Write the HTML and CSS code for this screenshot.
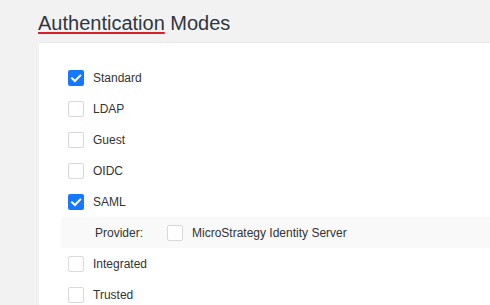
FILE: index.html
```html
<!DOCTYPE html>
<html>
<head>
<meta charset="utf-8">
<link rel="stylesheet" href="styles.css">
</head>
<body>
<div class="page">
  <h1 class="title"><span class="title-key">Authentication</span> Modes</h1>
  <div class="panel">
    <div class="row"><span class="cb checked"><svg viewBox="0 0 16 16" width="16" height="16"><path d="M4 8.3 L6.9 11 L12.2 5.6" fill="none" stroke="#fff" stroke-width="2" stroke-linecap="square"/></svg></span><span class="label">Standard</span></div>
    <div class="row"><span class="cb"></span><span class="label">LDAP</span></div>
    <div class="row"><span class="cb"></span><span class="label">Guest</span></div>
    <div class="row"><span class="cb"></span><span class="label">OIDC</span></div>
    <div class="row"><span class="cb checked"><svg viewBox="0 0 16 16" width="16" height="16"><path d="M4 8.3 L6.9 11 L12.2 5.6" fill="none" stroke="#fff" stroke-width="2" stroke-linecap="square"/></svg></span><span class="label">SAML</span></div>
    <div class="row sub"><span class="sub-label">Provider:</span><span class="cb"></span><span class="label">MicroStrategy Identity Server</span></div>
    <div class="row"><span class="cb"></span><span class="label">Integrated</span></div>
    <div class="row"><span class="cb"></span><span class="label">Trusted</span></div>
  </div>
</div>
</body>
</html>
```
FILE: styles.css
```css
html, body {
  margin: 0;
  padding: 0;
  background: #f2f2f2;
  font-family: "Liberation Sans", Arial, sans-serif;
  overflow: hidden;
}
.page {
  padding: 11px 0 0 38px;
  height: 305px;
  box-sizing: border-box;
  display: flex;
  flex-direction: column;
}
.title {
  margin: 0;
  font-size: 20px;
  line-height: 24px;
  font-weight: normal;
  color: #303640;
}
.title-key {
  text-decoration: underline;
  text-decoration-color: #d9202a;
  text-decoration-thickness: 2px;
  text-underline-offset: 2px;
}
.panel {
  margin: 7px 0 0 1px;
  flex: 1;
  background: #fff;
  border-top: 1px solid #e9e9e9;
  padding-top: 19px;
}
.row {
  height: 31px;
  display: flex;
  align-items: center;
  padding-left: 29px;
  font-size: 12px;
  color: #333;
}
.row.sub {
  margin-left: 22px;
  padding-left: 34px;
  background: #f9f9f9;
}
.sub-label {
  width: 72px;
}
.cb {
  width: 16px;
  height: 16px;
  box-sizing: border-box;
  border: 1px solid #d9d9d9;
  border-radius: 2px;
  background: #fff;
  margin-right: 9px;
  flex: none;
  display: flex;
}
.cb.checked {
  border: none;
  background: #1677ff;
}
```
